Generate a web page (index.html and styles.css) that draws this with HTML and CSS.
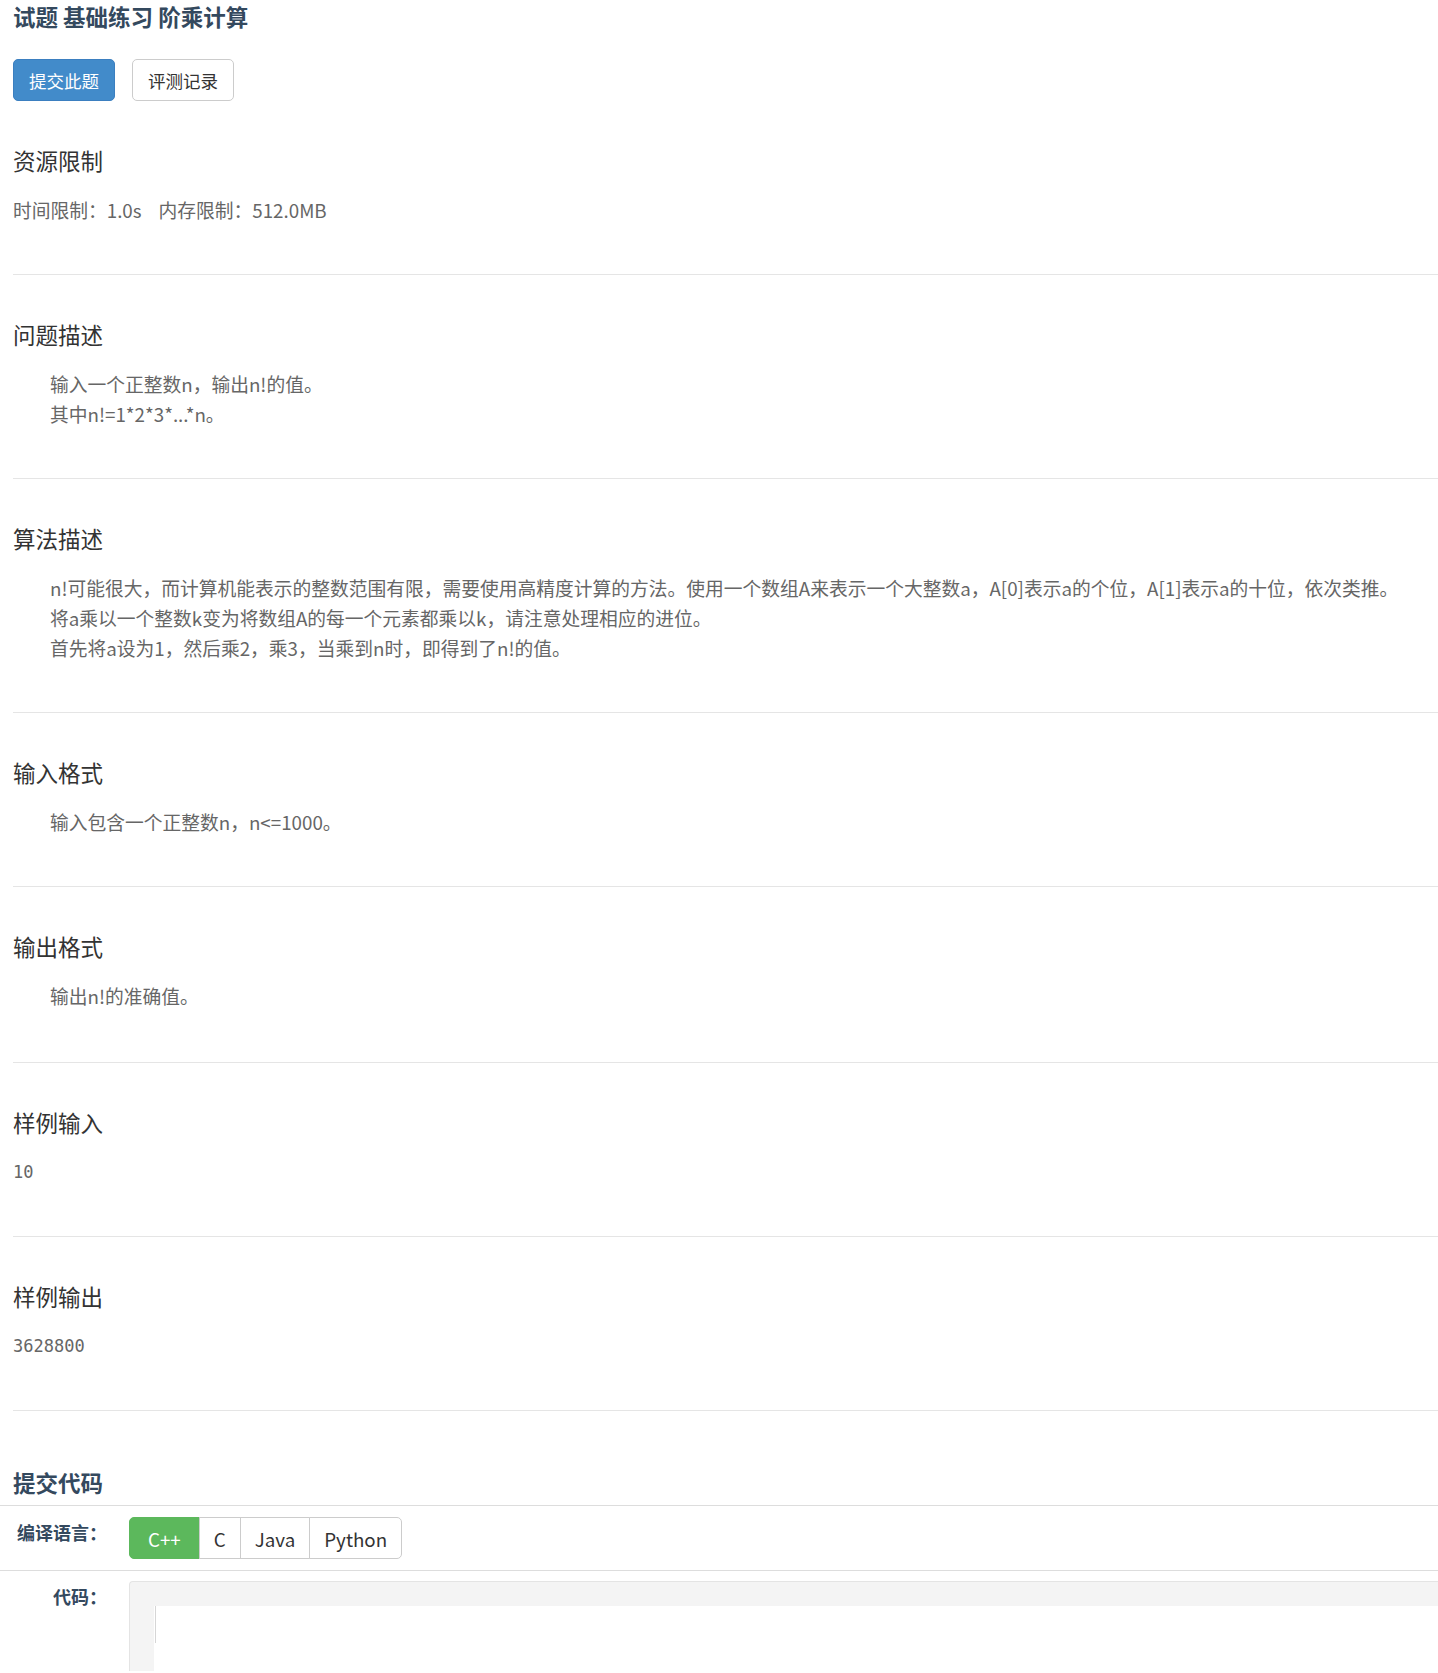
FILE: index.html
```html
<!DOCTYPE html>
<html lang="zh-CN">
<head>
  <meta charset="UTF-8" />
  <title>试题 基础练习 阶乘计算</title>
  <link rel="stylesheet" href="styles.css">
</head>
<body>
  <div class="page">
    <h1 class="title">试题 基础练习 阶乘计算</h1>
    <div class="actions">
      <a class="btn btn-primary" href="#">提交此题</a>
      <a class="btn btn-default" href="#">评测记录</a>
    </div>

    <section class="block">
      <h2>资源限制</h2>
      <p class="limits"><span>时间限制：1.0s</span><span>内存限制：512.0MB</span></p>
    </section>

    <section class="block">
      <h2>问题描述</h2>
      <div class="desc">
        <p>输入一个正整数n，输出n!的值。</p>
        <p>其中n!=1*2*3*...*n。</p>
      </div>
    </section>

    <section class="block">
      <h2>算法描述</h2>
      <div class="desc">
        <p>n!可能很大，而计算机能表示的整数范围有限，需要使用高精度计算的方法。使用一个数组A来表示一个大整数a，A[0]表示a的个位，A[1]表示a的十位，依次类推。</p>
        <p>将a乘以一个整数k变为将数组A的每一个元素都乘以k，请注意处理相应的进位。</p>
        <p>首先将a设为1，然后乘2，乘3，当乘到n时，即得到了n!的值。</p>
      </div>
    </section>

    <section class="block">
      <h2>输入格式</h2>
      <div class="desc">
        <p>输入包含一个正整数n，n&lt;=1000。</p>
      </div>
    </section>

    <section class="block block-tall">
      <h2>输出格式</h2>
      <div class="desc">
        <p>输出n!的准确值。</p>
      </div>
    </section>

    <section class="block">
      <h2>样例输入</h2>
      <pre class="sample">10</pre>
    </section>

    <section class="block">
      <h2>样例输出</h2>
      <pre class="sample">3628800</pre>
    </section>

    <h2 class="submit-title">提交代码</h2>
  </div>

  <form class="submit-form">
    <div class="form-row">
      <label class="form-label">编译语言：</label>
      <div class="btn-group">
        <button type="button" class="lang active">C++</button>
        <button type="button" class="lang">C</button>
        <button type="button" class="lang">Java</button>
        <button type="button" class="lang">Python</button>
      </div>
    </div>
    <div class="form-row form-row-code">
      <label class="form-label">代码：</label>
      <div class="editor">
        <div class="editor-area"><span class="cursor"></span></div>
      </div>
    </div>
  </form>
</body>
</html>
```

FILE: styles.css
```css
* {
  box-sizing: border-box;
}

body {
  margin: 0;
  font-family: "Noto Sans CJK SC", "Noto Sans", sans-serif;
  font-size: 18.75px;
  color: #666;
  background: #fff;
  overflow-x: hidden;
}

.page {
  padding-left: 13px;
}

.title {
  margin: 0;
  font-size: 22.5px;
  line-height: 32px;
  font-weight: 700;
  color: #34495e;
}

.actions {
  display: flex;
  gap: 17px;
  margin-top: 27px;
}

.btn {
  display: inline-block;
  padding: 7.5px 15px;
  font-size: 17.5px;
  line-height: 25px;
  border: 1px solid transparent;
  border-radius: 5px;
  text-decoration: none;
}

.btn-primary {
  background: #428bca;
  border-color: #3b7fc0;
  color: #fff;
}

.btn-default {
  background: #fff;
  border-color: #ccc;
  color: #333;
}

.block {
  padding: 44px 0 49px;
  border-bottom: 1px solid #e5e5e5;
}

.block-tall {
  padding-bottom: 51px;
}

.block h2 {
  margin: 0 0 20px;
  font-size: 22.5px;
  line-height: 30px;
  font-weight: 400;
  color: #333;
}

.block p {
  margin: 0;
  line-height: 30px;
}

.limits span {
  margin-right: 17px;
}

.desc {
  padding-left: 37px;
}

.sample {
  margin: 0;
  font-family: "DejaVu Sans Mono", "Liberation Mono", monospace;
  font-size: 17px;
  line-height: 30px;
  color: #666;
}

.submit-title {
  margin: 56px 0 8px;
  font-size: 22.5px;
  line-height: 30px;
  font-weight: 700;
  color: #34495e;
}

.submit-form {
  margin: 0;
}

.form-row {
  display: flex;
  align-items: flex-start;
  border-top: 1px solid #ddd;
  padding: 11px 0;
}

.form-row-code {
  padding: 10px 0 0;
}

.form-label {
  flex: 0 0 107px;
  margin-right: 22px;
  text-align: right;
  font-size: 18px;
  line-height: 30px;
  font-weight: 700;
  color: #34495e;
}

.btn-group {
  display: flex;
}

.lang {
  height: 42px;
  padding: 0 14px;
  margin-left: -1px;
  font-family: inherit;
  font-size: 18.75px;
  color: #333;
  background: #fff;
  border: 1px solid #ccc;
  cursor: pointer;
}

.lang:first-child {
  margin-left: 0;
  padding: 0 18px;
  border-radius: 5px 0 0 5px;
}

.lang:last-child {
  border-radius: 0 5px 5px 0;
}

.lang.active {
  background: #5cb85c;
  border-color: #5cb85c;
  color: #fff;
}

.editor {
  flex: 1;
  height: 90px;
  padding: 24px 0 0 24px;
  background: #f4f4f4;
  border: 1px solid #e4e4e4;
  border-right: 0;
  border-bottom: 0;
  border-top-left-radius: 4px;
}

.editor-area {
  height: 100%;
  background: #fff;
}

.cursor {
  display: block;
  width: 1px;
  height: 37px;
  margin-left: 1px;
  background: #d6d6d6;
}
```
